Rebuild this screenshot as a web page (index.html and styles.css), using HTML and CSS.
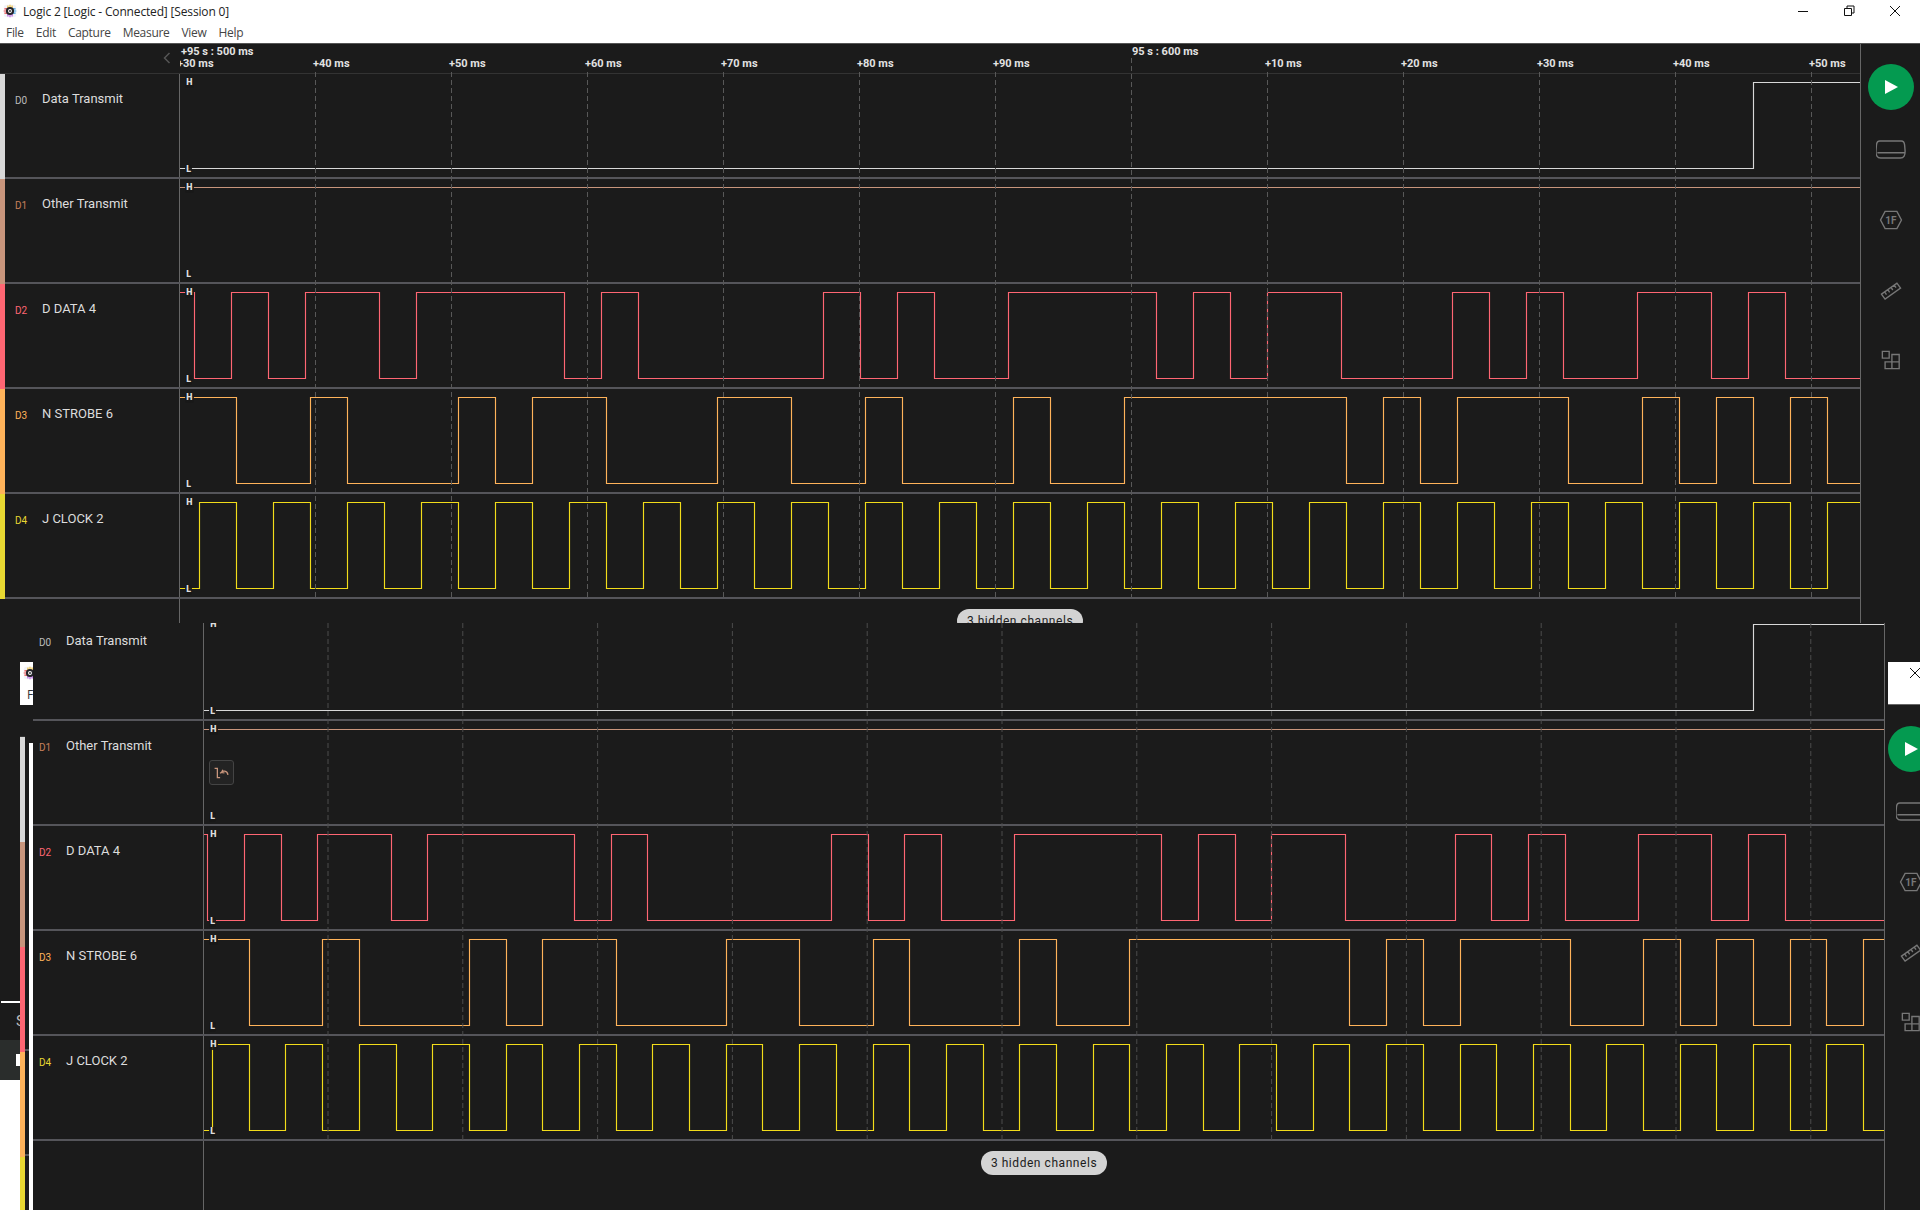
FILE: index.html
```html
<!DOCTYPE html>
<html lang="en">
<head>
    <meta charset="UTF-8">
    <title>Logic 2 [Logic - Connected] [Session 0]</title>
    <link rel="stylesheet" href="styles.css">
</head>
<body>

<svg class="defs" width="0" height="0">
    <symbol id="logo" viewBox="0 0 20 20">
        <rect x="1" y="1" width="18" height="18" rx="4" fill="#f3f3f8"/>
        <path d="M7 2v4M10 1v4M13 2v4" stroke="#f2c230" stroke-width="1.6"/>
        <path d="M2 7h4M1 10h4M2 13h4" stroke="#ef4a4a" stroke-width="1.6"/>
        <path d="M7 14v4M10 15v4M13 14v4" stroke="#b455e0" stroke-width="1.6"/>
        <path d="M14 7h4M15 10h4M14 13h4" stroke="#3da0e0" stroke-width="1.6"/>
        <circle cx="10" cy="10" r="5.8" fill="#24242a"/>
        <circle cx="10" cy="10" r="2.8" fill="#fff"/>
        <circle cx="10" cy="10" r="1.3" fill="#24242a"/>
    </symbol>
    <symbol id="side-device" viewBox="0 0 32 20">
        <path d="M5 1h22q3 0 3.500 4l.5 6q.5 8-5 8h-21q-5.500 0-5-8l.5-6q.5-4 3.500-4zM1.500 13.500h29"/>
    </symbol>
    <symbol id="side-analyzer" viewBox="0 0 26 22">
        <path d="M6.500 1.500h13l5 9.500-5 9.500h-13l-5-9.500z"/>
        <text class="hex-text" x="13" y="15" text-anchor="middle">1F</text>
    </symbol>
    <symbol id="side-ruler" viewBox="0 0 24 22">
        <path d="M1.500 15.500l17-12 4 5.500-17 12zM5 13l2 3M8.500 10.500l2 3M12 8l2 3M15.500 5.500l2 3"/>
    </symbol>
    <symbol id="side-ext" viewBox="0 0 22 22">
        <path d="M1.500 1.500h7.500v7.500h-7.500zM12 5h8v8h-8zM4.500 13h7.500v7.500h-7.500zM12 13h8v7.500h-8z"/>
    </symbol>
</svg>

<div class="titlebar">
    <div class="title-row">
        <svg class="logo"><use href="#logo"/></svg>
        <span class="title">Logic 2 [Logic - Connected] [Session 0]</span>
        <div class="win-buttons">
            <svg class="win-btn" viewBox="0 0 46 21"><path d="M18 10.500h10"/></svg>
            <svg class="win-btn" viewBox="0 0 46 21"><path d="M18.500 7.500h7v7h-7zM21 7.500v-2.500h7v7h-2.500"/></svg>
            <svg class="win-btn" viewBox="0 0 46 21"><path d="M18 5l10 10M28 5l-10 10"/></svg>
        </div>
    </div>
    <div class="menubar">
        <span>File</span>
        <span>Edit</span>
        <span>Capture</span>
        <span>Measure</span>
        <span>View</span>
        <span>Help</span>
    </div>
</div>

<div class="window win-a">
    <div class="main">
        <div class="ruler">
            <div class="ruler-back">
                <svg class="chevron" viewBox="0 0 8 12"><path d="M6.500 1l-5 5 5 5"/></svg>
            </div>
            <div class="ruler-scale">
                <div class="major">
                    <span class="major-first">+95 s : 500 ms</span>
                    <span>95 s : 600 ms</span>
                </div>
                <div class="minor">
                    <span>+30 ms</span>
                    <span>+40 ms</span>
                    <span>+50 ms</span>
                    <span>+60 ms</span>
                    <span>+70 ms</span>
                    <span>+80 ms</span>
                    <span>+90 ms</span>
                    <span></span>
                    <span>+10 ms</span>
                    <span>+20 ms</span>
                    <span>+30 ms</span>
                    <span>+40 ms</span>
                    <span>+50 ms</span>
                </div>
            </div>
        </div>

        <div class="chan c-d0">
            <div class="strip"></div>
            <div class="chan-body">
                <div class="chan-label"><span class="chan-id">D0</span><span class="chan-name">Data Transmit</span></div>
                <div class="trace">
                    <svg class="wave" data-win="a" data-ch="d0"></svg>
                    <span class="lvl lvl-h">H</span>
                    <span class="lvl lvl-l">L</span>
                </div>
            </div>
        </div>
        <div class="chan c-d1">
            <div class="strip"></div>
            <div class="chan-body">
                <div class="chan-label"><span class="chan-id">D1</span><span class="chan-name">Other Transmit</span></div>
                <div class="trace">
                    <svg class="wave" data-win="a" data-ch="d1"></svg>
                    <span class="lvl lvl-h">H</span>
                    <span class="lvl lvl-l">L</span>
                </div>
            </div>
        </div>
        <div class="chan c-d2">
            <div class="strip"></div>
            <div class="chan-body">
                <div class="chan-label"><span class="chan-id">D2</span><span class="chan-name">D DATA 4</span></div>
                <div class="trace">
                    <svg class="wave" data-win="a" data-ch="d2"></svg>
                    <span class="lvl lvl-h">H</span>
                    <span class="lvl lvl-l">L</span>
                </div>
            </div>
        </div>
        <div class="chan c-d3">
            <div class="strip"></div>
            <div class="chan-body">
                <div class="chan-label"><span class="chan-id">D3</span><span class="chan-name">N STROBE 6</span></div>
                <div class="trace">
                    <svg class="wave" data-win="a" data-ch="d3"></svg>
                    <span class="lvl lvl-h">H</span>
                    <span class="lvl lvl-l">L</span>
                </div>
            </div>
        </div>
        <div class="chan c-d4">
            <div class="strip"></div>
            <div class="chan-body">
                <div class="chan-label"><span class="chan-id">D4</span><span class="chan-name">J CLOCK 2</span></div>
                <div class="trace">
                    <svg class="wave" data-win="a" data-ch="d4"></svg>
                    <span class="lvl lvl-h">H</span>
                    <span class="lvl lvl-l">L</span>
                </div>
            </div>
        </div>

        <div class="foot">
            <div class="hidden-pill">3 hidden channels</div>
        </div>
        <svg class="grid" data-win="a"></svg>
    </div>
    <div class="side">
        <div class="play"><svg viewBox="0 0 46 46"><path d="M17 16l13 7-13 7z"/></svg></div>
        <svg class="side-icon"><use href="#side-device" x="1" y="6" width="30" height="19"/></svg>
        <svg class="side-icon"><use href="#side-analyzer" x="4" y="6" width="24" height="20"/></svg>
        <svg class="side-icon"><use href="#side-ruler" x="5" y="6" width="22" height="20"/></svg>
        <svg class="side-icon"><use href="#side-ext" x="6" y="6" width="20" height="20"/></svg>
    </div>
</div>

<!-- bits of a third window showing behind the second one -->
<div class="ghost-title">
    <svg class="logo"><use href="#logo"/></svg>
    <span class="ghost-f">F</span>
</div>
<div class="ghost-strips">
    <div class="gs-d0"></div>
    <div class="gs-d1"></div>
    <div class="gs-d2"></div>
    <div class="gs-d3"></div>
    <div class="gs-d4"></div>
</div>
<div class="ghost-edge"></div>
<div class="ghost-tick tick-1"></div>
<div class="ghost-tick tick-2"></div>
<div class="ghost-corner">
    <div class="gc-line"></div>
    <div class="gc-dark"><span>S</span></div>
    <div class="gc-green"><i></i></div>
    <div class="gc-white"></div>
</div>

<div class="window win-b">
    <div class="main">
        <div class="chan c-d0">
            <div class="chan-body">
                <div class="chan-label"><span class="chan-id">D0</span><span class="chan-name">Data Transmit</span></div>
                <div class="trace">
                    <svg class="wave" data-win="b" data-ch="d0"></svg>
                    <span class="lvl lvl-h">H</span>
                    <span class="lvl lvl-l">L</span>
                </div>
            </div>
        </div>
        <div class="chan c-d1">
            <div class="chan-body">
                <div class="chan-label"><span class="chan-id">D1</span><span class="chan-name">Other Transmit</span></div>
                <div class="trace">
                    <svg class="wave" data-win="b" data-ch="d1"></svg>
                    <span class="lvl lvl-h">H</span>
                    <span class="lvl lvl-l">L</span>
                    <div class="undo">
                        <svg viewBox="0 0 25 25"><path d="M5 8h3v10h3M11 13.500q2-3 5-2.500t3.500 4M14 9.500l-1.500 3 3.200.5"/></svg>
                    </div>
                </div>
            </div>
        </div>
        <div class="chan c-d2">
            <div class="chan-body">
                <div class="chan-label"><span class="chan-id">D2</span><span class="chan-name">D DATA 4</span></div>
                <div class="trace">
                    <svg class="wave" data-win="b" data-ch="d2"></svg>
                    <span class="lvl lvl-h">H</span>
                    <span class="lvl lvl-l">L</span>
                </div>
            </div>
        </div>
        <div class="chan c-d3">
            <div class="chan-body">
                <div class="chan-label"><span class="chan-id">D3</span><span class="chan-name">N STROBE 6</span></div>
                <div class="trace">
                    <svg class="wave" data-win="b" data-ch="d3"></svg>
                    <span class="lvl lvl-h">H</span>
                    <span class="lvl lvl-l">L</span>
                </div>
            </div>
        </div>
        <div class="chan c-d4">
            <div class="chan-body">
                <div class="chan-label"><span class="chan-id">D4</span><span class="chan-name">J CLOCK 2</span></div>
                <div class="trace">
                    <svg class="wave" data-win="b" data-ch="d4"></svg>
                    <span class="lvl lvl-h">H</span>
                    <span class="lvl lvl-l">L</span>
                </div>
            </div>
        </div>

        <div class="foot">
            <div class="hidden-pill">3 hidden channels</div>
        </div>
        <svg class="grid" data-win="b"></svg>
    </div>
    <div class="side">
        <div class="play"><svg viewBox="0 0 46 46"><path d="M17 16l13 7-13 7z"/></svg></div>
        <svg class="side-icon"><use href="#side-device" x="1" y="6" width="30" height="19"/></svg>
        <svg class="side-icon"><use href="#side-analyzer" x="4" y="6" width="24" height="20"/></svg>
        <svg class="side-icon"><use href="#side-ruler" x="5" y="6" width="22" height="20"/></svg>
        <svg class="side-icon"><use href="#side-ext" x="6" y="6" width="20" height="20"/></svg>
        <div class="ghost-close">
            <svg viewBox="0 0 12 12"><path d="M1 1l10 10M11 1l-10 10"/></svg>
        </div>
    </div>
</div>

<script src="script.js"></script>
</body>
</html>
```

FILE: styles.css
```css
html, body {
    margin: 0;
    width: 1920px;
    height: 1210px;
    overflow: hidden;
}
body {
    position: relative;
    background-color: #1b1b1b;
    font-family: Roboto, "Liberation Sans", sans-serif;
}
.defs {
    position: absolute;
}

/* title bar */
.titlebar {
    height: 43px;
    background: #fff;
    font-family: "Open Sans", "Noto Sans", sans-serif;
    color: #222;
}
.title-row {
    display: flex;
    align-items: center;
    height: 22px;
}
.logo {
    width: 14px;
    height: 14px;
    margin-left: 3px;
    flex: none;
}
.title {
    margin-left: 6px;
    font-size: 12px;
    letter-spacing: -0.16px;
}
.win-buttons {
    display: flex;
    margin-left: auto;
    margin-right: 2px;
}
.win-btn {
    width: 46px;
    height: 21px;
    fill: none;
    stroke: #111;
    stroke-width: 1;
}
.menubar {
    display: flex;
    gap: 12px;
    padding-left: 6px;
    font-size: 12px;
    line-height: 21px;
    color: #444;
    letter-spacing: -0.3px;
}

/* app windows */
.window {
    display: flex;
}
.win-a {
    height: 579px;
    overflow: hidden;
    border-top: 1px solid #555;
}
.win-a .main {
    width: 1860px;
}
.win-b {
    position: absolute;
    left: 33px;
    top: 623px;
    right: 0;
    bottom: 0;
    overflow: hidden;
    background-color: #1b1b1b;
}
.win-b .main {
    width: 1851px;
}
.win-b .chan:first-child {
    margin-top: -7px;
}
.main {
    position: relative;
    display: flex;
    flex-direction: column;
    flex: none;
}

/* time ruler */
.ruler {
    display: flex;
    flex: none;
    height: 29px;
    border-bottom: 1px solid #333;
}
.ruler-back {
    display: flex;
    justify-content: flex-end;
    width: 171px;
    padding: 8px 9px 0 0;
}
.chevron {
    width: 8px;
    height: 12px;
    fill: none;
    stroke: #555;
    stroke-width: 1.5;
}
.ruler-scale {
    flex: 1;
    overflow: hidden;
    padding-top: 2px;
    font-size: 11px;
    font-weight: 700;
    line-height: 12px;
    color: #e2e2e2;
    white-space: nowrap;
}
.major {
    display: flex;
    margin-left: 1px;
}
.major-first {
    width: 951px;
}
.minor {
    display: flex;
    margin-left: -3px;
}
.minor span {
    flex: none;
    width: 136px;
}

/* channels */
.chan {
    display: flex;
    height: 105px;
    flex: none;
}
.strip {
    width: 5px;
    flex: none;
}
.chan-body {
    display: flex;
    flex: 1;
    min-width: 0;
    border-bottom: 2px solid #55555a;
}
.chan-label {
    display: flex;
    align-items: flex-start;
    flex: none;
    box-sizing: border-box;
    padding-top: 17px;
    color: #ddd;
}
.win-a .chan-label {
    width: 174px;
    padding-left: 10px;
}
.win-b .chan-label {
    width: 170px;
    padding-left: 6px;
}
.chan-id {
    width: 27px;
    padding-top: 4px;
    font-size: 10px;
    line-height: 12px;
    color: #bbb;
}
.chan-name {
    font-size: 13px;
    line-height: 16px;
}
.trace {
    position: relative;
    flex: 1;
    min-width: 0;
    border-left: 1px solid #666;
}
.wave {
    display: block;
    width: 100%;
    height: 103px;
}
.wave path {
    fill: none;
    stroke-width: 1.15;
}
.lvl {
    position: absolute;
    left: 5px;
    padding: 0 1px;
    border-radius: 2px;
    background: rgba(24, 24, 24, 0.9);
    font-family: "DejaVu Sans", sans-serif;
    font-size: 8px;
    font-weight: 700;
    line-height: 10px;
    color: #ddd;
}
.lvl-h {
    top: 4px;
}
.lvl-l {
    top: 91px;
}

.c-d0 .strip { background: #d8d8d8; }
.c-d1 .strip { background: #c8957c; }
.c-d2 .strip { background: #ff6673; }
.c-d3 .strip { background: #ffb35a; }
.c-d4 .strip { background: #e8d832; }
.c-d0 path { stroke: #d8d8d8; }
.c-d1 path { stroke: #c8957c; }
.c-d2 path { stroke: #ff6673; }
.c-d3 path { stroke: #ffb35a; }
.c-d4 path { stroke: #f2dc1a; }
.c-d1 .chan-id { color: #c8805c; }
.c-d2 .chan-id { color: #ff6673; }
.c-d3 .chan-id { color: #ffb35a; }
.c-d4 .chan-id { color: #e8d832; }

.undo {
    position: absolute;
    left: 5px;
    top: 39px;
    width: 25px;
    height: 25px;
    box-sizing: border-box;
    background: #232323;
    border: 1px solid #444;
    border-radius: 3px;
}
.undo svg {
    display: block;
    width: 23px;
    height: 23px;
    fill: none;
    stroke: #777;
    stroke-width: 1.4;
}

.foot {
    display: flex;
    justify-content: center;
    flex: 1;
    min-height: 0;
    overflow: hidden;
    padding-top: 10px;
}
.win-a .foot {
    margin-left: 179px;
    border-left: 1px solid #666;
}
.win-b .foot {
    margin-left: 170px;
    border-left: 1px solid #666;
}
.hidden-pill {
    flex: none;
    width: 126px;
    height: 24px;
    border-radius: 12px;
    background: #d3d3d3;
    font-size: 12px;
    letter-spacing: 0.55px;
    line-height: 24px;
    text-align: center;
    white-space: nowrap;
    color: #1b1b1b;
}
.grid {
    position: absolute;
    left: 0;
    top: 0;
    width: 100%;
    height: 100%;
    pointer-events: none;
}
.grid line {
    stroke-dasharray: 5 3;
    stroke-width: 1;
}
.win-a .grid line { stroke: #585858; }
.win-b .grid line { stroke: #4c4c4c; }

/* right tool column */
.side {
    position: relative;
    display: flex;
    flex-direction: column;
    align-items: center;
    flex: 1;
    border-left: 1px solid #666;
}
.win-a .side {
    padding-top: 20px;
}
.win-b .side {
    align-items: flex-start;
    padding: 103px 0 0 3px;
}
.play {
    width: 46px;
    height: 46px;
    flex: none;
    margin-bottom: 24px;
    border-radius: 50%;
    background: #049a50;
}
.play svg {
    display: block;
    fill: #fff;
}
.side-icon {
    flex: none;
    width: 32px;
    height: 32px;
    margin-bottom: 38px;
    fill: none;
    stroke: #777;
    stroke-width: 1.5;
}
.win-b .side-icon {
    margin-left: 7px;
}
.hex-text {
    fill: #777;
    stroke: none;
    font-family: Roboto, sans-serif;
    font-size: 11px;
    font-weight: 700;
}
.ghost-close {
    position: absolute;
    left: 3px;
    top: 39px;
    width: 32px;
    height: 43px;
    box-sizing: border-box;
    background: #fff;
    border-bottom: 1px solid #666;
}
.ghost-close svg {
    position: absolute;
    left: 21px;
    top: 5px;
    width: 12px;
    height: 12px;
    fill: none;
    stroke: #111;
}

/* third window peeking out on the left */
.ghost-title {
    position: absolute;
    left: 20px;
    top: 662px;
    width: 13px;
    height: 43px;
    overflow: hidden;
    background: #fff;
    font-family: "Open Sans", sans-serif;
    font-size: 12px;
    color: #333;
}
.ghost-title .logo {
    position: absolute;
    left: 0;
    top: 4px;
}
.ghost-f {
    position: absolute;
    left: 7px;
    top: 24px;
}
.ghost-strips {
    position: absolute;
    left: 20px;
    top: 736px;
    bottom: 0;
    display: flex;
    flex-direction: column;
    width: 5px;
    border-top: 1px solid #333;
}
.ghost-strips div {
    height: 105px;
    flex: none;
}
.gs-d0 { background: #d8d8d8; }
.gs-d1 { background: #c8957c; }
.gs-d2 { background: #ff6673; }
.gs-d3 { background: #ffb35a; }
.gs-d4 { background: #e8d832; }
.ghost-edge {
    position: absolute;
    left: 29px;
    top: 743px;
    bottom: 0;
    width: 4px;
    background: #fff;
}
.ghost-tick {
    position: absolute;
    left: 25px;
    width: 4px;
    height: 2px;
    background: #55555a;
}
.tick-1 { top: 1049px; }
.tick-2 { top: 1154px; }
.ghost-corner {
    position: absolute;
    left: 0;
    top: 1001px;
    bottom: 0;
    display: flex;
    flex-direction: column;
    width: 20px;
}
.gc-line {
    height: 2px;
    margin-left: 1px;
    background: #fff;
}
.gc-dark {
    display: flex;
    justify-content: flex-end;
    height: 37px;
    overflow: hidden;
    padding-top: 9px;
    box-sizing: border-box;
    font-size: 15px;
    color: #bbb;
}
.gc-dark span {
    margin-right: -5px;
}
.gc-green {
    display: flex;
    justify-content: flex-end;
    align-items: center;
    height: 40px;
    background: #2a2d2c;
}
.gc-green i {
    width: 4px;
    height: 12px;
    background: #fff;
}
.gc-white {
    flex: 1;
    background: #fff;
}
```

FILE: script.js
```js
// edge positions of each channel, as indexes on its half-period grid
const D2_EDGES = [0, 1, 2, 3, 5, 6, 10, 11, 12, 17, 18, 19, 20, 22, 26, 27, 28, 29, 31, 34, 35, 36, 37, 39, 41, 42, 43];
const D3_EDGES = [0, 2, 3, 6, 7, 8, 10, 13, 15, 17, 18, 21, 22, 24, 30, 31, 32, 33, 36, 38, 39, 40, 41, 42, 43, 44];
const D4_EDGES = [];
for (let i = -1; i <= 45; i++) D4_EDGES.push(i);

const WINS = {
    a: { x0: 180, c2: 194.5, c3: 236.5, step: 37, tx: 315.5, tstep: 136 },
    b: { x0: 204, c2: 207.7, c3: 249.3, step: 36.69, tx: 328, tstep: 134.8 }
};
const HIGH = 8.5, LOW = 94.5, WIDTH = 1680;

function snap(v) {
    return Math.floor(v) + 0.5;
}

function edgesFor(win, ch) {
    if (ch === 'd0') return { high: false, xs: [1753.5] };
    if (ch === 'd1') return { high: true, xs: [] };
    if (ch === 'd2') return { high: true, xs: D2_EDGES.map(k => snap(win.c2 + win.step * k)) };
    if (ch === 'd3') return { high: true, xs: D3_EDGES.map(k => snap(win.c3 + win.step * k)) };
    return { high: false, xs: D4_EDGES.map(k => snap(win.c3 + win.step * k)) };
}

document.querySelectorAll('.wave').forEach(function(svg) {
    const win = WINS[svg.dataset.win];
    const sig = edgesFor(win, svg.dataset.ch);
    let level = sig.high;
    let d = 'M' + win.x0 + ' ' + (level ? HIGH : LOW);
    sig.xs.forEach(function(x) {
        level = !level;
        d += 'H' + x + 'V' + (level ? HIGH : LOW);
    });
    d += 'H' + (win.x0 + WIDTH);
    svg.setAttribute('viewBox', win.x0 + ' 0 ' + WIDTH + ' 103');
    svg.setAttribute('preserveAspectRatio', 'xMinYMin slice');
    const path = document.createElementNS('http://www.w3.org/2000/svg', 'path');
    path.setAttribute('d', d);
    svg.appendChild(path);
});

function addLine(svg, x, y1, y2) {
    const line = document.createElementNS('http://www.w3.org/2000/svg', 'line');
    line.setAttribute('x1', x);
    line.setAttribute('x2', x);
    line.setAttribute('y1', y1);
    line.setAttribute('y2', y2);
    svg.appendChild(line);
}

document.querySelectorAll('.grid').forEach(function(svg) {
    const isA = svg.dataset.win === 'a';
    const win = WINS[svg.dataset.win];
    const box = svg.getBoundingClientRect();
    svg.setAttribute('viewBox', box.left + ' ' + box.top + ' ' + box.width + ' ' + box.height);
    for (let k = 0; k < 12; k++) {
        const x = win.tx + win.tstep * k;
        const top = isA ? (k === 6 ? 58 : 72) : 623;
        addLine(svg, x, top, isA ? 597 : 1140);
    }
});
```
